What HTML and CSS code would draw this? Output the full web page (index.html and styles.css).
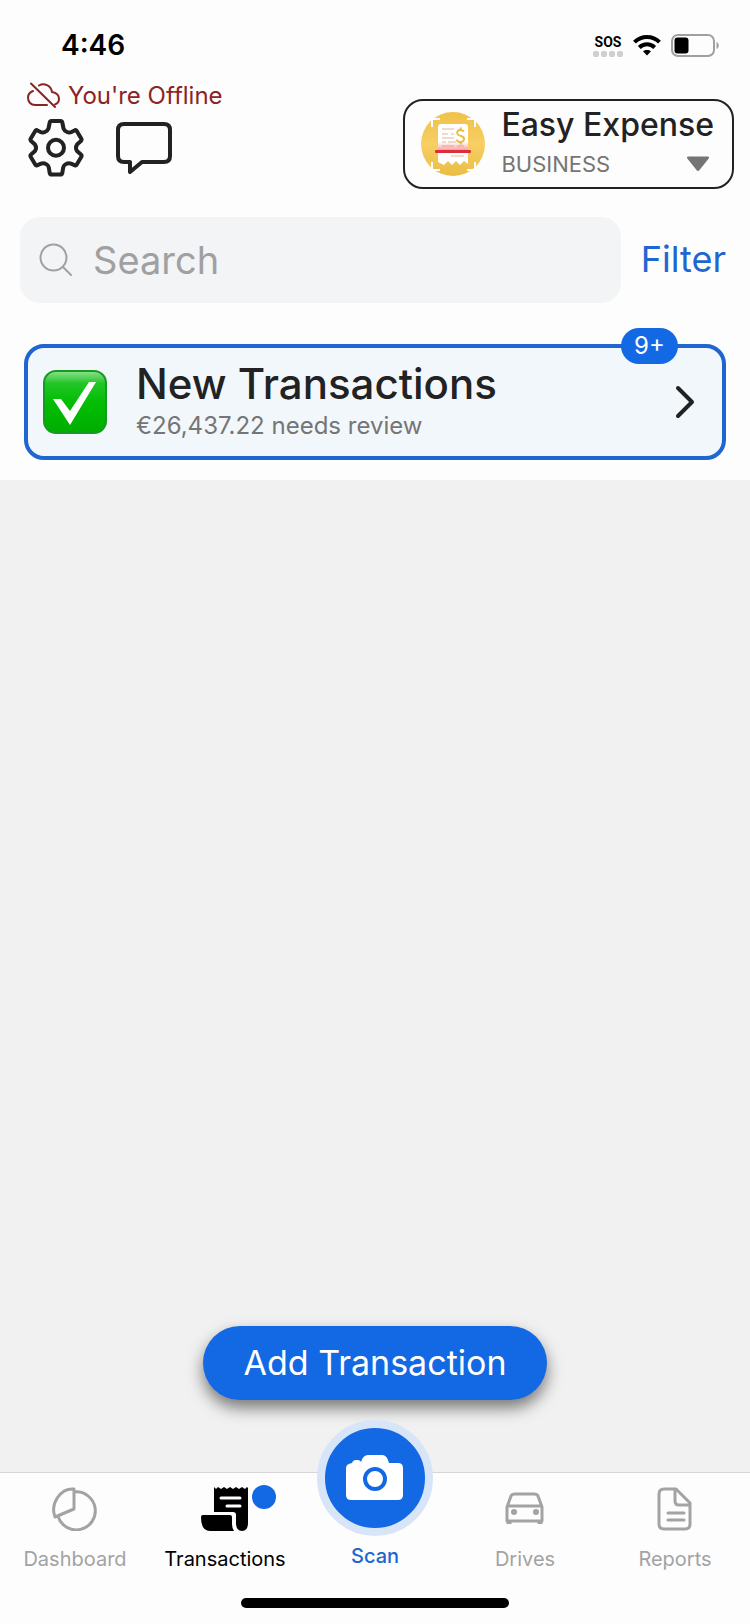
FILE: index.html
```html
<!DOCTYPE html>
<html lang="en">
<head>
    <meta charset="UTF-8">
    <meta name="viewport" content="width=device-width, initial-scale=1.0">
    <title>Transactions</title>
    <link rel="stylesheet" href="styles.css">
</head>
<body>
    <!-- Status Bar -->
    <div class="status-bar">
        <span class="status-time">4:46</span>
        <div class="status-icons">
            <div class="sos">
                <span class="sos-text">SOS</span>
                <svg width="30" height="6" viewBox="0 0 30 6" fill="#cfcfcf">
                    <rect x="0" width="6" height="6" rx="2"/>
                    <rect x="8" width="6" height="6" rx="2"/>
                    <rect x="16" width="6" height="6" rx="2"/>
                    <rect x="24" width="6" height="6" rx="2"/>
                </svg>
            </div>
            <svg width="28" height="22" viewBox="0 0 28 22">
                <g fill="none" stroke="#000" stroke-width="4">
                    <path d="M1.500 8.200C8.500 1.200 19.500 1.200 26.500 8.200"/>
                    <path d="M6.300 13.500C10.700 9.300 17.300 9.300 21.700 13.500"/>
                </g>
                <path d="M10 17.300C12.300 15.400 15.700 15.400 18 17.300L14 21.500Z"/>
            </svg>
            <svg width="49" height="23" viewBox="0 0 49 23">
                <rect x="1" y="1" width="42" height="21" rx="6" fill="none" stroke="#a0a0a0" stroke-width="2"/>
                <rect x="3.500" y="3.500" width="14" height="16" rx="3"/>
                <path d="M45.500 8C48.500 9 48.500 14 45.500 15Z" fill="#a0a0a0"/>
            </svg>
        </div>
    </div>

    <!-- Header -->
    <header class="header">
        <div class="header-left">
            <div class="offline">
                <svg width="33" height="27" viewBox="0 0 33 27" fill="none" stroke="#8b2323" stroke-width="2" stroke-linecap="round">
                    <path d="M4 1.500L28 25"/>
                    <path d="M6 9C2 10.500 1 13 1 15.500C1 20 4 23 8 23H20"/>
                    <path d="M12 3.500C17 .5 24 3.500 25 10C30 11 32 14 32 17C32 19.500 30.500 21.500 28 22.500"/>
                </svg>
                <span>You're Offline</span>
            </div>
            <div class="header-icons">
                <button class="icon-button" aria-label="Settings">
                    <svg width="58" height="60" viewBox="27 118 58 60" fill="none" stroke="#222" stroke-width="4" stroke-linejoin="round">
                        <path d="M51.500 121H60.500Q62 121 62.300 122.500L63.500 128.500Q64.500 131 67 132Q69.500 133 72 131.700L75 130.200Q76 129.800 76.600 130.800L81.500 139Q82 140 81.200 140.800L77 144.500Q75 147.700 77 151L81.200 154.700Q82 155.500 81.500 156.500L76.600 164.700Q76 165.700 75 165.300L71 163.700Q68.500 162.800 66 164Q63.700 165 63.200 167.500L62.300 173Q62 174.500 60.500 174.500H51.500Q50 174.500 49.700 173L48.800 167.500Q48.300 165 46 164Q43.500 162.800 41 163.700L37 165.300Q36 165.700 35.400 164.700L30.500 156.500Q30 155.500 30.800 154.700L35 151Q37 147.700 35 144.500L30.800 140.800Q30 140 30.500 139L35.400 130.800Q36 129.800 37 130.200L40 131.700Q42.500 133 45 132Q47.500 131 48.500 128.500L49.700 122.500Q50 121 51.500 121Z"/>
                        <circle cx="56" cy="147.700" r="8"/>
                    </svg>
                </button>
                <button class="icon-button" aria-label="Messages">
                    <svg width="58" height="60" viewBox="115 118 58 60" fill="none" stroke="#222" stroke-width="4" stroke-linejoin="round">
                        <path d="M124 124H164Q170 124 170 130V156Q170 162 164 162H142L130 172V162H124Q118 162 118 156V130Q118 124 124 124Z"/>
                    </svg>
                </button>
            </div>
        </div>
        <button class="account">
            <svg class="account-logo" width="64" height="64" viewBox="0 0 64 64">
                <defs>
                    <linearGradient id="gold" x1="0" y1="0" x2="0" y2="1">
                        <stop offset="0" stop-color="#f0c14b"/>
                        <stop offset=".5" stop-color="#f7cf63"/>
                        <stop offset="1" stop-color="#eabd43"/>
                    </linearGradient>
                    <linearGradient id="glow" x1="0" y1="0" x2="0" y2="1">
                        <stop offset="0" stop-color="#f26a6a" stop-opacity="0"/>
                        <stop offset="1" stop-color="#f26a6a" stop-opacity=".7"/>
                    </linearGradient>
                </defs>
                <circle cx="32" cy="32" r="32" fill="url(#gold)"/>
                <path d="M11 15V7H19M46 7H54V15M11 50V58H19M46 58H54V50" fill="none" stroke="#fff" stroke-width="2"/>
                <path d="M20 12H44Q47 12 47 15V52L43 49L39 53L35 49L31 53L27 49L23 53L17 50V15Q17 12 20 12Z" fill="#fff"/>
                <path d="M21 17H33M21 22H27M30 22H33M21 26H33M21 30H25M27 30H35M21 34H33M36 34H43M30 44H43" stroke="#e0b89a"/>
                <path d="M43 19.500Q41 17.500 38.500 18Q35.500 19 36.500 22Q37 23.300 40 24Q43.500 25 43 27.500Q42 30.500 38.500 30Q36 29.500 35.500 27.500M39.700 15.500V18M39.700 30V32.500" fill="none" stroke="#edbc43" stroke-width="2"/>
                <rect x="17" y="30" width="30" height="9" fill="url(#glow)"/>
                <rect x="14" y="38" width="36" height="3" rx="1" fill="#dc2f3a"/>
            </svg>
            <span class="account-text">
                <span class="account-name">Easy Expense</span>
                <span class="account-row">
                    <span class="account-type">BUSINESS</span>
                    <svg width="24" height="16" viewBox="0 0 24 16" fill="#757575">
                        <path d="M2.500 .5H21.500Q24 .5 22.500 2.800L13.500 14Q12 16 10.500 14L1.500 2.800Q0 .5 2.500 .5Z"/>
                    </svg>
                </span>
            </span>
        </button>
    </header>

    <!-- Search -->
    <div class="search-row">
        <div class="search-box">
            <label for="search" aria-label="Search">
                <svg width="34" height="34" viewBox="0 0 34 34" fill="none" stroke="#a0a0a2" stroke-width="2" stroke-linecap="round">
                    <circle cx="14.500" cy="14.500" r="13"/>
                    <path d="M24 24L32 32"/>
                </svg>
            </label>
            <input type="search" id="search" placeholder="Search">
        </div>
        <button class="filter-button">Filter</button>
    </div>

    <!-- New Transactions -->
    <section class="review-section">
        <button class="review-card">
            <svg width="64" height="64" viewBox="0 0 64 64">
                <defs>
                    <linearGradient id="green" x1="0" y1="0" x2="0" y2="1">
                        <stop offset="0" stop-color="#8fe08f"/>
                        <stop offset=".2" stop-color="#22c526"/>
                        <stop offset=".5" stop-color="#02be04"/>
                        <stop offset="1" stop-color="#00ad00"/>
                    </linearGradient>
                </defs>
                <rect x="1" y="1" width="62" height="62" rx="12" fill="url(#green)" stroke="#159a22" stroke-width="2"/>
                <path d="M10 29H18L27 41L46 12H53L27 55Z" fill="#fff"/>
            </svg>
            <span class="review-text">
                <span class="review-title">New Transactions</span>
                <span class="review-amount">€26,437.22 needs review</span>
            </span>
            <svg width="20" height="34" viewBox="0 0 20 34" fill="none" stroke="#222" stroke-width="4" stroke-linecap="round" stroke-linejoin="round">
                <path d="M3 3L17 17L3 31"/>
            </svg>
            <span class="badge">9+</span>
        </button>
    </section>

    <!-- Transaction list -->
    <main class="list">
        <button class="add-button">Add Transaction</button>
    </main>

    <!-- Tab Bar -->
    <nav class="tab-bar">
        <button class="tab">
            <svg width="48" height="44" viewBox="0 0 48 44" fill="none" stroke="#a3a3a3" stroke-width="3" stroke-linejoin="round">
                <path d="M23 2C9 1 -1 17 4 30L23 22Z"/>
                <path d="M23 5A19 19 0 1 1 7 29"/>
            </svg>
            <span>Dashboard</span>
        </button>
        <button class="tab tab-active">
            <svg width="48" height="44" viewBox="0 0 48 44">
                <path d="M13 0L15 2L17 0L20 2L23 0L26 2L29 0L32 2L35 0L38 2L41 0L44 2L46 0L47 1V36Q47 44 41 44Q35 44 35 36V28Q35 25 32 25H13Z"/>
                <path d="M20 11H39M26 19H39" stroke="#fff" stroke-width="3" stroke-linecap="round"/>
                <path d="M2 28H29Q31 28 31 30V37Q31 41 33 44H9Q0 44 0 30Q0 28 2 28Z"/>
            </svg>
            <span>Transactions</span>
            <i class="dot"></i>
        </button>
        <button class="tab tab-scan">
            <span class="scan-circle">
                <svg width="58" height="46" viewBox="0 0 58 46">
                    <path d="M6 8Q7 5 10 5H12Q14 5 15 7Q17 0 22 0H36Q40 0 42 5L43 8H52Q57 8 57 13V40Q57 45 52 45H5Q0 45 0 40V13Q0 9 6 8Z" fill="#fff"/>
                    <circle cx="29" cy="24" r="10" fill="#fff" stroke="#1368e4" stroke-width="4"/>
                </svg>
            </span>
            <span>Scan</span>
        </button>
        <button class="tab">
            <svg width="48" height="44" viewBox="0 0 48 44" fill="none" stroke="#a3a3a3" stroke-width="3" stroke-linejoin="round">
                <path d="M6 20L10 9Q11 7 14 7H33Q36 7 37 9L41 20V34H6ZM6 19H41"/>
                <path d="M8 34V37M39 34V37" stroke-width="5"/>
                <g fill="#a3a3a3" stroke="none">
                    <circle cx="13" cy="25" r="3"/>
                    <circle cx="35" cy="25" r="3"/>
                </g>
            </svg>
            <span>Drives</span>
        </button>
        <button class="tab">
            <svg width="48" height="44" viewBox="0 0 48 44" fill="none" stroke="#a3a3a3" stroke-width="3" stroke-linejoin="round" stroke-linecap="round">
                <path d="M13 2H25L39 16V37Q39 42 34 42H13Q8 42 8 37V7Q8 2 13 2ZM24 2V14Q24 18 28 18H39M17 26H33M17 33H33"/>
            </svg>
            <span>Reports</span>
        </button>
    </nav>
    <div class="home-indicator"></div>
</body>
</html>
```
FILE: styles.css
```css
* {
    box-sizing: border-box;
}
body {
    display: flex;
    flex-direction: column;
    min-height: 100vh;
    margin: 0;
    font-family: Inter, "Liberation Sans", sans-serif;
    background-color: #fdfdfd;
    color: #222;
}
button {
    padding: 0;
    border: none;
    background: none;
    font-family: inherit;
    color: inherit;
    cursor: pointer;
}
svg {
    display: block;
    flex-shrink: 0;
}

/* Status bar */
.status-bar {
    display: flex;
    justify-content: space-between;
    align-items: center;
    height: 78px;
    padding: 12px 30px 0 61px;
    color: #000;
}
.status-time {
    font-size: 28px;
    font-weight: 600;
}
.status-icons {
    display: flex;
    align-items: center;
    gap: 10px;
}
.sos {
    display: flex;
    flex-direction: column;
    align-items: center;
    gap: 1px;
}
.sos-text {
    font-family: "Liberation Sans Narrow", Roboto, sans-serif;
    font-size: 14px;
    font-weight: 700;
    line-height: 16px;
}

/* Header */
.header {
    display: flex;
    justify-content: space-between;
    align-items: flex-end;
    padding: 0 16px 0 27px;
}
.header-left {
    padding-bottom: 11px;
}
.offline {
    display: flex;
    align-items: center;
    gap: 8px;
    height: 34px;
    font-size: 24px;
    color: #8b2323;
}
.header-icons {
    display: flex;
    gap: 30px;
    margin-top: 6px;
}
.account {
    display: flex;
    align-items: center;
    gap: 16px;
    height: 90px;
    padding: 0 18px 2px 16px;
    border: 2px solid #222;
    border-radius: 20px;
    text-align: left;
}
.account-logo {
    margin-top: 2px;
}
.account-text {
    display: flex;
    flex-direction: column;
}
.account-name {
    font-size: 32px;
    font-weight: 500;
    line-height: 42px;
}
.account-row {
    display: flex;
    justify-content: space-between;
    align-items: center;
    padding-right: 4px;
    font-size: 22px;
    line-height: 36px;
    color: #757575;
}

/* Search */
.search-row {
    display: flex;
    align-items: center;
    gap: 20px;
    padding: 28px 24px 0 20px;
}
.search-box {
    display: flex;
    flex: 1;
    align-items: center;
    gap: 20px;
    min-width: 0;
    height: 86px;
    padding: 0 19px;
    border-radius: 20px;
    background-color: #f3f4f6;
}
.search-box input {
    flex: 1;
    width: 100%;
    min-width: 0;
    padding: 0;
    border: none;
    outline: none;
    background: none;
    font-family: inherit;
    font-size: 38px;
    color: #222;
}
.search-box input::placeholder {
    color: #a0a0a2;
}
.filter-button {
    padding-bottom: 2px;
    font-size: 36px;
    color: #1f66d0;
}

/* Review card */
.review-section {
    padding: 41px 24px 20px;
}
.review-card {
    position: relative;
    display: flex;
    align-items: center;
    width: 100%;
    height: 116px;
    padding: 0 27px 0 15px;
    border: 4px solid #1f66d0;
    border-radius: 20px;
    background-color: #f2f7fc;
    text-align: left;
}
.review-text {
    display: flex;
    flex: 1;
    flex-direction: column;
    margin-left: 29px;
}
.review-title {
    font-size: 42px;
    font-weight: 500;
    line-height: 48px;
}
.review-amount {
    font-size: 24px;
    line-height: 36px;
    color: #757575;
}
.badge {
    position: absolute;
    top: -20px;
    right: 44px;
    width: 57px;
    border-radius: 18px;
    background-color: #1368e4;
    font-size: 24px;
    line-height: 36px;
    text-align: center;
    color: #fff;
}

/* List */
.list {
    display: flex;
    flex: 1;
    justify-content: center;
    align-items: flex-end;
    padding-bottom: 72px;
    background-color: #f1f1f1;
}
.add-button {
    height: 74px;
    padding: 0 41px 2px;
    border-radius: 37px;
    background-color: #1368e4;
    box-shadow: 0 8px 16px rgba(0, 0, 0, 0.5);
    font-size: 34px;
    color: #fff;
}

/* Tab bar */
.tab-bar {
    display: flex;
    border-top: 1px solid #d6d6d6;
}
.tab {
    position: relative;
    display: flex;
    flex: 1;
    flex-direction: column;
    align-items: center;
    gap: 14px;
    padding-top: 14px;
    font-size: 20px;
    line-height: 28px;
    color: #a3a3a3;
}
.tab-active {
    color: #000;
}
.dot {
    position: absolute;
    top: 12px;
    right: 24px;
    width: 24px;
    height: 24px;
    border-radius: 50%;
    background-color: #1368e4;
}
.tab-scan {
    gap: 6px;
    margin-top: -53px;
    padding-top: 0;
    font-weight: 500;
    color: #1f66d0;
}
.scan-circle {
    display: flex;
    justify-content: center;
    align-items: center;
    width: 116px;
    height: 116px;
    border: 8px solid #d8e5f8;
    border-radius: 50%;
    background-color: #1368e4;
}
.home-indicator {
    width: 268px;
    height: 10px;
    margin: 25px auto 16px;
    border-radius: 5px;
    background-color: #000;
}
```
